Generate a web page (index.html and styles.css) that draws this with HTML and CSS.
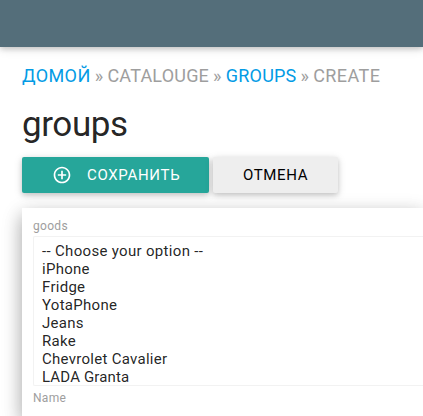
FILE: index.html
```html
<!DOCTYPE html>
<html lang="ru">
<head>
<meta charset="utf-8">
<title>groups</title>
<link rel="stylesheet" href="styles.css">
</head>
<body>
<header class="navbar"></header>
<main class="content">
  <nav class="breadcrumbs"><a class="home" href="#">ДОМОЙ</a> » <span>CATALOUGE</span> » <a class="section" href="#">GROUPS</a> » <span class="current">CREATE</span></nav>
  <h1 class="title">groups</h1>
  <div class="actions">
    <button class="btn btn-save" type="button">
      <svg class="icon" viewBox="0 0 24 24"><path fill="currentColor" d="M13 7h-2v4H7v2h4v4h2v-4h4v-2h-4V7zm-1-5C6.48 2 2 6.48 2 12s4.480 10 10 10 10-4.480 10-10S17.520 2 12 2zm0 18c-4.410 0-8-3.590-8-8s3.590-8 8-8 8 3.590 8 8-3.590 8-8 8z"/></svg>
      <span>СОХРАНИТЬ</span>
    </button>
    <button class="btn btn-cancel" type="button">ОТМЕНА</button>
  </div>
  <form class="card">
    <div class="label">goods</div>
    <ul class="options">
      <li class="placeholder">-- Choose your option --</li>
      <li>iPhone</li>
      <li>Fridge</li>
      <li>YotaPhone</li>
      <li>Jeans</li>
      <li>Rake</li>
      <li>Chevrolet Cavalier</li>
      <li class="last">LADA Granta</li>
    </ul>
    <div class="label">Name</div>
  </form>
</main>
</body>
</html>
```
FILE: styles.css
```css
* { box-sizing: border-box; }
html, body { height: 100%; }
body {
  display: flex;
  flex-direction: column;
  margin: 0;
  overflow: hidden;
  background: #fff;
  color: rgba(0, 0, 0, 0.87);
  font: 15px/1.5 Roboto, sans-serif;
}
.navbar {
  flex: none;
  height: 47px;
  background: #546e7a;
  box-shadow: 0 2px 5px 0 rgba(0, 0, 0, 0.16), 0 2px 10px 0 rgba(0, 0, 0, 0.12);
}
.content {
  display: flex;
  flex: 1;
  flex-direction: column;
  padding-left: 22px;
}
.breadcrumbs {
  padding-top: 15px;
  font-size: 18px;
  line-height: 27px;
  letter-spacing: 0.2px;
  word-spacing: -0.6px;
  color: #9e9e9e;
  white-space: nowrap;
}
.breadcrumbs a { color: #039be5; text-decoration: none; }
.breadcrumbs .home,
.breadcrumbs .current { letter-spacing: 0.4px; }
.title {
  margin: 15px 0 11px;
  font-size: 35px;
  line-height: 42px;
  font-weight: 400;
  letter-spacing: -0.4px;
}
.actions { display: flex; gap: 4px; height: 36px; }
.btn {
  display: flex;
  align-items: center;
  height: 36px;
  padding: 0 30px;
  border: 0;
  border-radius: 2px;
  font: 15px/36px Roboto, sans-serif;
  white-space: nowrap;
  box-shadow: 0 2px 5px 0 rgba(0, 0, 0, 0.16), 0 2px 10px 0 rgba(0, 0, 0, 0.12);
}
.btn-save { width: 187px; background: #26a69a; color: #fff; letter-spacing: 0.68px; }
.btn-cancel { width: 125px; background: #eee; color: #000; letter-spacing: 0.65px; }
.icon { flex: none; width: 20px; height: 20px; margin-right: 15px; }
.card {
  flex: 1;
  margin-top: 15px;
  padding: 9px 0 0 11px;
  background: #fff;
  box-shadow: 0 8px 17px 0 rgba(0, 0, 0, 0.2), 0 6px 20px 0 rgba(0, 0, 0, 0.19);
}
.label { font-size: 12px; line-height: 18px; letter-spacing: 0.3px; color: #9e9e9e; }
.options {
  height: 150px;
  margin: 1px 0 3px;
  padding: 5px 8px;
  overflow: hidden;
  border: 1px solid #f2f2f2;
  border-right: 0;
  border-radius: 2px 0 0 2px;
  list-style: none;
  line-height: 18px;
  letter-spacing: 0.28px;
}
.placeholder { letter-spacing: 0.32px; }
.last { letter-spacing: 0.15px; }
```
